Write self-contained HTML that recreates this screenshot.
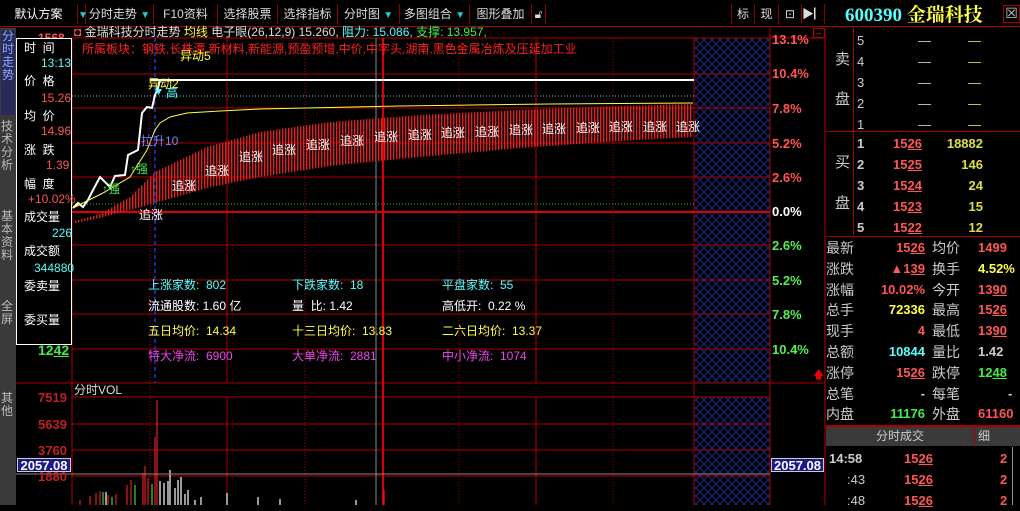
<!DOCTYPE html><html><head><meta charset="utf-8"><style>
*{margin:0;padding:0;box-sizing:border-box}
body{width:1020px;height:505px;background:#000;overflow:hidden;position:relative;font-family:"Liberation Sans","Noto Sans CJK SC","WenQuanYi Zen Hei",sans-serif;font-size:12px;color:#c0c0c0}
.a{position:absolute;white-space:nowrap;line-height:1}
.tb{position:absolute;top:4px;height:20px;border-right:1px solid #800;color:#ddd;font-size:12px;line-height:20px;text-align:center}
.tri{color:#2cc;font-size:10px}
.r{color:#ff5555}.y{color:#ffff44}.c{color:#55ffff}.g{color:#44ee44}.w{color:#fff}.m{color:#ee44ee}
.u{text-decoration:underline}
</style></head><body>
<!-- toolbar -->
<div class="a" style="left:0;top:0;width:1020px;height:27px;border-bottom:1px solid #a00"></div>
<div class="tb" style="left:0;width:78px;color:#fff">默认方案</div>
<div class="tb" style="left:78px;width:8px"><span class="tri">▼</span></div>
<div class="tb" style="left:86px;width:68px">分时走势 <span class="tri">▼</span></div>
<div class="tb" style="left:154px;width:64px">F10资料</div>
<div class="tb" style="left:218px;width:60px">选择股票</div>
<div class="tb" style="left:278px;width:60px">选择指标</div>
<div class="tb" style="left:338px;width:62px">分时图 <span class="tri">▼</span></div>
<div class="tb" style="left:400px;width:70px">多图组合 <span class="tri">▼</span></div>
<div class="tb" style="left:470px;width:62px">图形叠加</div>
<div class="tb" style="left:532px;width:14px">🔓︎</div>
<div class="tb" style="left:731px;width:24px;border-left:1px solid #800">标</div>
<div class="tb" style="left:755px;width:24px">现</div>
<div class="tb" style="left:779px;width:23px">⊡</div>
<div class="tb" style="left:802px;width:23px">▶▏</div>
<div class="a" style="left:845px;top:6px;font-size:19px;font-weight:bold;font-family:'Liberation Serif','Noto Serif CJK SC',serif"><span class="c">600390</span> <span class="y">金瑞科技</span></div>
<div class="a" style="left:1003px;top:5px;width:17px;height:18px;border:1px solid #a00;color:#ccc;font-size:14px;text-align:center">☒</div>
<!-- left tabs -->
<div class="a" style="left:0;top:28px;width:16px;height:477px;background:#3a3a3a"></div>
<div class="a" style="left:1px;top:30px;width:14px;height:85px;background:#2a2a5a;color:#88aaff;font-size:12px;white-space:normal;line-height:13px;text-align:center">分时走势</div>
<div class="a" style="left:1px;top:120px;width:14px;color:#bbb;white-space:normal;line-height:13px">技术分析</div>
<div class="a" style="left:1px;top:210px;width:14px;color:#bbb;white-space:normal;line-height:13px">基本资料</div>
<div class="a" style="left:1px;top:300px;width:14px;color:#bbb;white-space:normal;line-height:13px">全屏</div>
<div class="a" style="left:1px;top:392px;width:14px;color:#bbb;white-space:normal;line-height:13px">其他</div>
<!-- chart svg -->
<svg class="a" style="left:0;top:0" width="1020" height="505">
<defs>
<pattern id="st" width="3" height="10" patternUnits="userSpaceOnUse"><rect width="1.4" height="10" fill="#e02020"/></pattern>
<pattern id="hx" width="8" height="8" patternUnits="userSpaceOnUse"><path d="M0 0L8 8M8 0L0 8" stroke="#1a2a8a" stroke-width="1"/></pattern>
</defs>
<rect x="695" y="38" width="75" height="345" fill="url(#hx)"/>
<rect x="695" y="397" width="75" height="108" fill="url(#hx)"/>
<g stroke="#b00000" stroke-width="1">
<line x1="72" y1="38" x2="825" y2="38"/>
<line x1="72" y1="74" x2="770" y2="74"/><line x1="72" y1="108" x2="770" y2="108"/>
<line x1="72" y1="143" x2="770" y2="143"/><line x1="72" y1="177" x2="770" y2="177"/>
<line x1="72" y1="245" x2="770" y2="245"/><line x1="72" y1="280" x2="770" y2="280"/>
<line x1="72" y1="314" x2="770" y2="314"/><line x1="72" y1="349" x2="770" y2="349"/>
<line x1="16" y1="383" x2="825" y2="383"/><line x1="72" y1="397" x2="770" y2="397"/>
<line x1="72" y1="424" x2="770" y2="424"/><line x1="72" y1="450" x2="770" y2="450"/>
<line x1="72" y1="476" x2="770" y2="476"/>
<line x1="72" y1="38" x2="72" y2="505"/><line x1="227" y1="38" x2="227" y2="383"/><line x1="227" y1="397" x2="227" y2="505"/>
<line x1="536" y1="38" x2="536" y2="383"/><line x1="536" y1="397" x2="536" y2="505"/>
<line x1="694" y1="38" x2="694" y2="505"/><line x1="770" y1="28" x2="770" y2="505"/>
<line x1="825" y1="28" x2="825" y2="505"/>
</g>
<g stroke="#b00000" stroke-dasharray="1,2"><line x1="150" y1="38" x2="150" y2="505"/><line x1="305" y1="38" x2="305" y2="505"/><line x1="459" y1="38" x2="459" y2="505"/><line x1="613" y1="38" x2="613" y2="505"/></g>
<line x1="383" y1="38" x2="383" y2="505" stroke="#dd0000" stroke-width="2"/>
<line x1="376" y1="38" x2="376" y2="505" stroke="#888" stroke-width="1"/>
<line x1="155" y1="38" x2="155" y2="383" stroke="#2233cc" stroke-dasharray="4,3" stroke-width="1.5"/>
<line x1="72" y1="212" x2="770" y2="212" stroke="#dd0000" stroke-width="2"/>
<line x1="72" y1="204" x2="694" y2="204" stroke="#33bb33" stroke-dasharray="1,2"/>
<line x1="72" y1="96" x2="694" y2="96" stroke="#55cccc" stroke-dasharray="1,2"/>
<line x1="150" y1="80" x2="694" y2="80" stroke="#fff" stroke-width="2"/>
<polygon points="75,221 100,214 130,197 155,172 207,147 260,132 330,122 420,115 520,110 620,106 693,104 693,137 620,141 520,148 420,157 330,166 260,177 207,188 155,203 130,210 100,218 75,223" fill="url(#st)"/>
<polyline points="73,208 78,203 83,207 88,200 93,190 100,177 110,187 115,176 125,175 128,155 138,150 142,113 147,107 152,108 155,95 158,88 160,80 694,80" fill="none" stroke="#fff" stroke-width="2"/>
<polyline points="73,208 103,193 130,177 147,150 155,130 160,123 170,117 187,113 220,111 260,109 400,106 550,104 693,103" fill="none" stroke="#ffff44" stroke-width="1"/>
<polygon points="155,89 162,89 158.5,95" fill="#55ffff"/>
<!-- volume -->
<g stroke="#e02020" stroke-width="1.2">
<line x1="80" y1="505" x2="80" y2="500"/><line x1="90" y1="505" x2="90" y2="496"/><line x1="96" y1="505" x2="96" y2="493"/><line x1="100" y1="505" x2="100" y2="491"/><line x1="108" y1="505" x2="108" y2="495"/><line x1="116" y1="505" x2="116" y2="494"/><line x1="127" y1="505" x2="127" y2="485"/><line x1="131" y1="505" x2="131" y2="480"/><line x1="143" y1="505" x2="143" y2="473"/><line x1="145" y1="505" x2="145" y2="466"/><line x1="148" y1="505" x2="148" y2="478"/><line x1="155" y1="505" x2="155" y2="437"/><line x1="157" y1="505" x2="157" y2="400"/><line x1="384" y1="505" x2="384" y2="490"/>
</g>
<g stroke="#33dd33" stroke-width="1.2"><line x1="103" y1="505" x2="103" y2="492"/><line x1="135" y1="505" x2="135" y2="485"/><line x1="152" y1="505" x2="152" y2="484"/><line x1="112" y1="505" x2="112" y2="497"/></g>
<g stroke="#fff" stroke-width="1.2"><line x1="106" y1="505" x2="106" y2="492"/><line x1="160" y1="505" x2="160" y2="481"/><line x1="164" y1="505" x2="164" y2="483"/><line x1="168" y1="505" x2="168" y2="481"/><line x1="170" y1="505" x2="170" y2="470"/><line x1="175" y1="505" x2="175" y2="488"/><line x1="178" y1="505" x2="178" y2="480"/><line x1="181" y1="505" x2="181" y2="477"/><line x1="185" y1="505" x2="185" y2="494"/><line x1="188" y1="505" x2="188" y2="490"/><line x1="195" y1="505" x2="195" y2="500"/><line x1="201" y1="505" x2="201" y2="497"/><line x1="227" y1="505" x2="227" y2="493"/><line x1="258" y1="505" x2="258" y2="497"/><line x1="280" y1="505" x2="280" y2="499"/><line x1="356" y1="505" x2="356" y2="500"/></g>
<line x1="16" y1="474" x2="770" y2="474" stroke="#888"/>
</svg>
<!-- title line -->
<div class="a" style="left:74px;top:26px;color:#ddd"><span class="r">◘</span> 金瑞科技分时走势 <span class="y">均线</span> 电子眼(26,12,9) 15.260, <span class="c">阻力: 15.086,</span> <span class="g">支撑: 13.957,</span></div>
<div class="a r" style="left:82px;top:43px;color:#ff2020">所属板块：钢铁,长株潭,新材料,新能源,预盈预增,中价,中字头,湖南,黑色金属冶炼及压延加工业</div>
<div class="a y" style="left:180px;top:50px">异动5</div>
<div class="a y" style="left:148px;top:78px">异动2</div>
<div class="a c" style="left:166px;top:87px">高</div>
<div class="a" style="left:141px;top:135px;color:#7788ff">拉升10</div>
<div class="a g" style="left:130px;top:163px">↑强</div>
<div class="a g" style="left:102px;top:183px">↑强</div>
<div class="a w" style="left:139px;top:209px">追涨</div>
<div class="a w" style="left:172px;top:180px">追涨</div>
<div class="a w" style="left:205px;top:165px">追涨</div>
<div class="a w" style="left:239px;top:151px">追涨</div>
<div class="a w" style="left:272px;top:144px">追涨</div>
<div class="a w" style="left:306px;top:139px">追涨</div>
<div class="a w" style="left:340px;top:135px">追涨</div>
<div class="a w" style="left:374px;top:131px">追涨</div>
<div class="a w" style="left:408px;top:129px">追涨</div>
<div class="a w" style="left:441px;top:127px">追涨</div>
<div class="a w" style="left:475px;top:126px">追涨</div>
<div class="a w" style="left:509px;top:124px">追涨</div>
<div class="a w" style="left:542px;top:123px">追涨</div>
<div class="a w" style="left:576px;top:122px">追涨</div>
<div class="a w" style="left:609px;top:121px">追涨</div>
<div class="a w" style="left:643px;top:121px">追涨</div>
<div class="a w" style="left:676px;top:121px">追涨</div>
<!-- stats -->
<div class="a c" style="left:148px;top:279px">上涨家数:&nbsp; 802</div>
<div class="a c" style="left:292px;top:279px">下跌家数:&nbsp; 18</div>
<div class="a c" style="left:442px;top:279px">平盘家数:&nbsp; 55</div>
<div class="a w" style="left:148px;top:300px">流通股数: 1.60 亿</div>
<div class="a w" style="left:292px;top:300px">量&nbsp; 比: 1.42</div>
<div class="a w" style="left:442px;top:300px">高低开:&nbsp; 0.22 %</div>
<div class="a y" style="left:148px;top:325px">五日均价:&nbsp; 14.34</div>
<div class="a y" style="left:292px;top:325px">十三日均价:&nbsp; 13.83</div>
<div class="a y" style="left:442px;top:325px">二六日均价:&nbsp; 13.37</div>
<div class="a m" style="left:148px;top:350px">特大净流:&nbsp; 6900</div>
<div class="a m" style="left:292px;top:350px">大单净流:&nbsp; 2881</div>
<div class="a m" style="left:442px;top:350px">中小净流:&nbsp; 1074</div>
<!-- left price labels -->
<div class="a r" style="left:38px;top:32px;font-weight:bold">1568</div>
<div class="a g" style="left:38px;top:343px;font-weight:bold;font-size:14px">12<span class="u">42</span></div>
<!-- info box -->
<div class="a" style="left:16px;top:38px;width:56px;height:307px;background:#000;border:1px solid #fff"></div>
<div class="a w" style="left:24px;top:42px">时&nbsp; 间</div><div class="a c" style="left:41px;top:57px">13:13</div>
<div class="a w" style="left:24px;top:75px">价&nbsp; 格</div><div class="a r" style="left:41px;top:92px">15.26</div>
<div class="a w" style="left:24px;top:110px">均&nbsp; 价</div><div class="a r" style="left:41px;top:125px">14.96</div>
<div class="a w" style="left:24px;top:144px">涨&nbsp; 跌</div><div class="a r" style="left:46px;top:159px">1.39</div>
<div class="a w" style="left:24px;top:178px">幅&nbsp; 度</div><div class="a r" style="left:28px;top:193px">+10.02%</div>
<div class="a w" style="left:24px;top:211px">成交量</div><div class="a c" style="left:52px;top:227px">226</div>
<div class="a w" style="left:24px;top:245px">成交额</div><div class="a c" style="left:34px;top:262px">344880</div>
<div class="a w" style="left:24px;top:280px">委卖量</div>
<div class="a w" style="left:24px;top:314px">委买量</div>
<!-- volume labels -->
<div class="a" style="left:74px;top:384px;color:#ddd">分时VOL</div>
<div class="a" style="left:38px;top:391px;color:#c02020;font-weight:bold;font-size:13px">7519</div>
<div class="a" style="left:38px;top:418px;color:#c02020;font-weight:bold;font-size:13px">5639</div>
<div class="a" style="left:38px;top:444px;color:#c02020;font-weight:bold;font-size:13px">3760</div>
<div class="a" style="left:38px;top:470px;color:#c02020;font-weight:bold;font-size:13px">1880</div>
<div class="a" style="left:17px;top:458px;width:54px;height:14px;background:#1a1a8a;color:#fff;font-weight:bold;font-size:13px;text-align:center;line-height:14px;border:1px solid #ccc">2057.08</div>
<div class="a" style="left:771px;top:458px;width:53px;height:14px;background:#1a1a8a;color:#fff;font-weight:bold;font-size:13px;text-align:center;line-height:14px;border:1px solid #ccc">2057.08</div>
<!-- right axis -->
<div class="a" style="left:772px;top:33px;color:#ff5555;font-weight:bold;font-size:13px">13.1%</div>
<div class="a" style="left:772px;top:67px;color:#ff5555;font-weight:bold;font-size:13px">10.4%</div>
<div class="a" style="left:772px;top:102px;color:#ff5555;font-weight:bold;font-size:13px">7.8%</div>
<div class="a" style="left:772px;top:137px;color:#ff5555;font-weight:bold;font-size:13px">5.2%</div>
<div class="a" style="left:772px;top:171px;color:#ff5555;font-weight:bold;font-size:13px">2.6%</div>
<div class="a" style="left:772px;top:205px;color:#fff;font-weight:bold;font-size:13px">0.0%</div>
<div class="a" style="left:772px;top:239px;color:#55ee55;font-weight:bold;font-size:13px">2.6%</div>
<div class="a" style="left:772px;top:274px;color:#55ee55;font-weight:bold;font-size:13px">5.2%</div>
<div class="a" style="left:772px;top:308px;color:#55ee55;font-weight:bold;font-size:13px">7.8%</div>
<div class="a" style="left:772px;top:343px;color:#55ee55;font-weight:bold;font-size:13px">10.4%</div>
<div class="a" style="left:813px;top:28px;width:12px;height:10px;border:1px solid #a00;color:#f33;font-size:8px;line-height:8px">→</div>
<div class="a" style="left:813px;top:370px;color:#e00;font-size:11px">🡅</div>
<!-- right panel -->
<div class="a" style="left:826px;top:131px;width:194px;height:1px;background:#a00"></div>
<div class="a" style="left:853px;top:28px;width:1px;height:207px;background:#a00"></div>
<div class="a" style="left:826px;top:236px;width:194px;height:1px;background:#a00"></div>
<div class="a" style="left:835px;top:52px;font-size:15px;color:#ccc">卖</div>
<div class="a" style="left:835px;top:92px;font-size:15px;color:#ccc">盘</div>
<div class="a" style="left:835px;top:155px;font-size:15px;color:#ccc">买</div>
<div class="a" style="left:835px;top:196px;font-size:15px;color:#ccc">盘</div>
<div style="position:absolute;left:857px;top:30px;font-size:13px;line-height:21px;color:#ccc">5<br>4<br>3<br>2<br>1</div>
<div style="position:absolute;left:918px;top:30px;font-size:13px;line-height:21px;color:#ccc">—<br>—<br>—<br>—<br>—</div>
<div style="position:absolute;left:968px;top:30px;font-size:13px;line-height:21px;color:#dd4">—<br>—<br>—<br>—<br>—</div>
<div style="position:absolute;left:857px;top:133px;font-size:13px;line-height:21px;color:#ccc;font-weight:bold">1<br>2<br>3<br>4<br>5</div>
<div style="position:absolute;left:893px;top:133px;font-size:13px;line-height:21px;color:#ff5555;font-weight:bold">15<span class="u">26</span><br>15<span class="u">25</span><br>15<span class="u">24</span><br>15<span class="u">23</span><br>15<span class="u">22</span></div>
<div style="position:absolute;left:940px;top:133px;width:43px;text-align:right;font-size:13px;line-height:21px;color:#dddd44;font-weight:bold">18882<br>146<br>24<br>15<br>12</div>
<div style="position:absolute;left:826px;top:238px;font-size:14px;line-height:20.8px;color:#ccc">最新<br>涨跌<br>涨幅<br>总手<br>现手<br>总额<br>涨停<br>总笔<br>内盘</div>
<div style="position:absolute;left:862px;top:238px;width:63px;text-align:right;font-size:13px;line-height:20.8px;font-weight:bold"><span class="r">15<span class="u">26</span></span><br><span class="r">▲1<span class="u">39</span></span><br><span class="r">10.02%</span><br><span class="y">72336</span><br><span class="r">4</span><br><span class="c">10844</span><br><span class="r">15<span class="u">26</span></span><br><span style="color:#ccc">-</span><br><span class="g">11176</span></div>
<div style="position:absolute;left:932px;top:238px;font-size:14px;line-height:20.8px;color:#ccc">均价<br>换手<br>今开<br>最高<br>最低<br>量比<br>跌停<br>每笔<br>外盘</div>
<div style="position:absolute;left:978px;top:238px;font-size:13px;line-height:20.8px;font-weight:bold"><span class="r">1499</span><br><span class="y">4.52%</span><br><span class="r">13<span class="u">90</span></span><br><span class="r">15<span class="u">26</span></span><br><span class="r">13<span class="u">90</span></span><br><span style="color:#ccc">1.42</span><br><span class="g">12<span class="u">48</span></span><br><span style="color:#ccc;padding-left:30px">-</span><br><span class="r">61160</span></div>
<div class="a" style="left:826px;top:425px;width:194px;height:2px;background:#a00"></div>
<div class="a" style="left:826px;top:427px;width:148px;height:19px;background:#3a3a3a;color:#ccc;text-align:center;line-height:19px">分时成交</div>
<div class="a" style="left:974px;top:427px;width:46px;height:19px;background:#3a3a3a;border-left:1px solid #a00;color:#ccc;line-height:19px;padding-left:3px">细</div>
<div style="position:absolute;left:829px;top:449px;font-size:13px;line-height:20.8px;color:#ccc;font-weight:bold">14:58<br><span style="padding-left:18px;font-weight:normal">:43</span><br><span style="padding-left:18px;font-weight:normal">:48</span></div>
<div style="position:absolute;left:904px;top:449px;font-size:13px;line-height:20.8px;color:#ff5555;font-weight:bold">15<span class="u">26</span><br>15<span class="u">26</span><br>15<span class="u">26</span></div>
<div style="position:absolute;left:1000px;top:449px;font-size:13px;line-height:20.8px;color:#ff5555;font-weight:bold">2<br>2<br>2</div>
<div class="a" style="left:1012px;top:447px;width:1px;height:58px;background:#888"></div>
</body></html>
